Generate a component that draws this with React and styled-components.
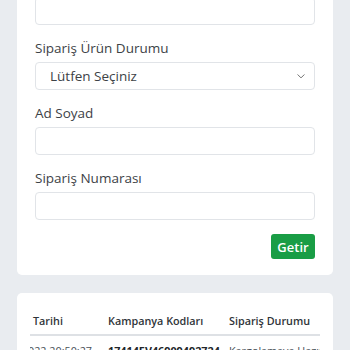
import React from "react";
import styled, { createGlobalStyle } from "styled-components";

const Global = createGlobalStyle`
  html, body { margin: 0; padding: 0; background: #e9ecf0; }
  body { font-family: "Open Sans", "Noto Sans", sans-serif; color: #343a40; overflow: hidden; }
  * { box-sizing: border-box; }
`;

const Page = styled.div`
  display: flex;
  flex-direction: column;
  gap: 18px;
  padding: 0 17px;
  margin-top: -44px;
`;

const Card = styled.div`
  background: #fff;
  border-radius: 5px;
  padding: ${(p) => p.$pad};
  display: flex;
  flex-direction: column;
`;

const Field = styled.div`
  display: flex;
  flex-direction: column;
  gap: 5px;
  margin-bottom: 14px;
`;

const Label = styled.label`
  font-size: 13.5px;
  line-height: 18px;
  color: #3d4246;
`;

const Input = styled.input`
  height: 28px;
  border: 1px solid #e1e4e8;
  border-radius: 4px;
  background: #fff;
  padding: 0 14px;
  font: inherit;
  font-size: 13.5px;
  outline: none;
`;

const SelectBox = styled.div`
  height: 28px;
  border: 1px solid #e1e4e8;
  border-radius: 4px;
  display: flex;
  align-items: center;
  justify-content: space-between;
  padding: 0 8px 0 14px;
  font-size: 13.5px;
  color: #3d4246;
`;

const Actions = styled.div`
  display: flex;
  justify-content: flex-end;
`;

const Button = styled.button`
  height: 25px;
  width: 44px;
  border: none;
  border-radius: 3px;
  background: #199d45;
  color: #fff;
  font-family: inherit;
  font-size: 13px;
  font-weight: 600;
  padding: 0;
`;

const TableWrap = styled.div`
  overflow: hidden;
`;

const Table = styled.table`
  border-collapse: collapse;
  width: 320px;
  table-layout: fixed;
  font-size: 10.8px;
  line-height: 16px;
`;

const Th = styled.th`
  text-align: left;
  font-weight: 600;
  color: #2f3439;
  padding: 7px 3px 5px;
  border-bottom: 2px solid #dee1e5;
  white-space: nowrap;
  overflow: hidden;
`;

const Td = styled.td`
  padding: 7px ${(p) => p.$pr || "3px"} 0 ${(p) => p.$pl || "3px"};
  white-space: nowrap;
  overflow: hidden;
  color: ${(p) => (p.$bold ? "#212529" : "#495057")};
  font-weight: ${(p) => (p.$bold ? 700 : 400)};
`;

const EndClip = styled.div`
  display: flex;
  justify-content: flex-end;
  overflow: hidden;
`;

const Chevron = () => (
  <svg width="10" height="10" viewBox="0 0 16 16" fill="none" stroke="#666" strokeWidth="1.5" strokeLinecap="round" strokeLinejoin="round">
    <path d="M3 6l5 5 5-5" />
  </svg>
);

export default function App() {
  return (
    <>
      <Global />
      <Page>
        <Card $pad="18px 18px 16px">
          <Field>
            <Label>Kampanya Kodu</Label>
            <Input />
          </Field>
          <Field>
            <Label>Sipariş Ürün Durumu</Label>
            <SelectBox>
              <span>Lütfen Seçiniz</span>
              <Chevron />
            </SelectBox>
          </Field>
          <Field>
            <Label>Ad Soyad</Label>
            <Input />
          </Field>
          <Field>
            <Label>Sipariş Numarası</Label>
            <Input />
          </Field>
          <Actions>
            <Button>Getir</Button>
          </Actions>
        </Card>
        <Card $pad="13px 13px 20px">
          <TableWrap>
            <Table>
              <colgroup>
                <col style={{ width: 75 }} />
                <col style={{ width: 121 }} />
                <col style={{ width: 124 }} />
              </colgroup>
              <thead>
                <tr>
                  <Th>Tarihi</Th>
                  <Th>Kampanya Kodları</Th>
                  <Th>Sipariş Durumu</Th>
                </tr>
              </thead>
              <tbody>
                <tr>
                  <Td $pl="0" $pr="13px">
                    <EndClip>
                      <span>12.10.2022 20:50:27</span>
                    </EndClip>
                  </Td>
                  <Td $bold>17414EV46909492724</Td>
                  <Td>Kargolamaya Hazır</Td>
                </tr>
              </tbody>
            </Table>
          </TableWrap>
        </Card>
      </Page>
    </>
  );
}
